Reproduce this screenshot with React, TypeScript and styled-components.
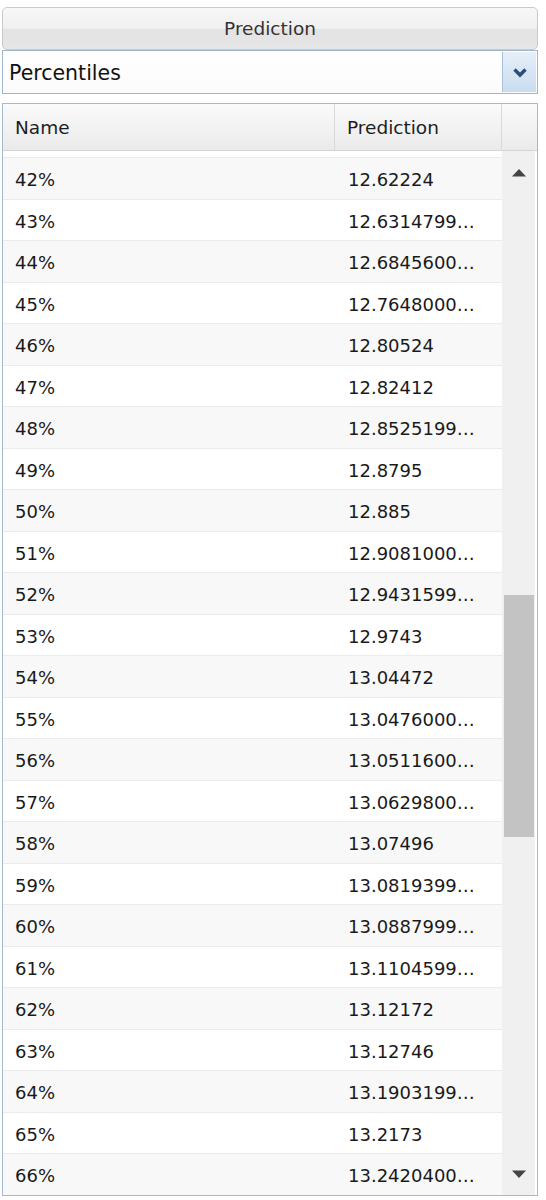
import React from "react";
import styled, { createGlobalStyle } from "styled-components";

const Global = createGlobalStyle`
  html, body { margin: 0; padding: 0; background: #ffffff; }
  body { font-family: "DejaVu Sans", "Liberation Sans", sans-serif; }
`;

const Page = styled.div`
  width: 536px;
  padding: 7px 8px 0 2px;
  display: flex;
  flex-direction: column;
`;

const TitleButton = styled.div`
  height: 43px;
  box-sizing: border-box;
  border: 1px solid #c9c9c9;
  border-radius: 5px;
  background: linear-gradient(#f7f7f7 0%, #f0f0f0 50%, #e3e3e3 52%, #e6e6e6 100%);
  display: flex;
  align-items: center;
  justify-content: center;
  font-size: 18.5px;
  color: #333333;
  padding-bottom: 1px;
`;

const Combo = styled.div`
  height: 44px;
  box-sizing: border-box;
  border: 1px solid #9db7cf;
  background: linear-gradient(#ffffff, #fbfbfb);
  display: flex;
  align-items: stretch;
`;

const ComboText = styled.div`
  flex: 1;
  display: flex;
  align-items: center;
  padding-left: 6px;
  padding-top: 1px;
  font-size: 20.5px;
  color: #111111;
`;

const ComboArrow = styled.div`
  width: 33px;
  margin: 1px;
  border-left: 1px solid #a9c2da;
  background: linear-gradient(#e6eff8, #c9ddf0);
  display: flex;
  align-items: center;
  justify-content: center;
`;

const Table = styled.div`
  margin-top: 9px;
  height: 1093px;
  box-sizing: border-box;
  border: 1px solid #a3bbd2;
  display: flex;
  flex-direction: column;
  overflow: hidden;
`;

const HeaderRow = styled.div`
  height: 47px;
  flex: none;
  box-sizing: border-box;
  display: grid;
  grid-template-columns: 332px 167px 1fr;
  background: linear-gradient(#fafafa, #f1f1f1 60%, #eaeaea);
  border-bottom: 1px solid #d6d6d6;
`;

const HeaderCell = styled.div<{ $last?: boolean }>`
  display: flex;
  align-items: center;
  padding-left: ${(p) => (p.$last ? "0" : "12px")};
  font-size: 18.5px;
  color: #1e1e1e;
  border-right: ${(p) => (p.$last ? "none" : "1px solid #d9d9d9")};
`;

const Body = styled.div`
  flex: 1;
  display: flex;
  min-height: 0;
`;

const Rows = styled.div`
  width: 499px;
  overflow: hidden;
  display: flex;
  flex-direction: column;
`;

const PartialRow = styled.div`
  height: 7px;
  flex: none;
  box-sizing: border-box;
  background: #ffffff;
  border-bottom: 1px solid #ebebeb;
`;

const Row = styled.div<{ $alt: boolean }>`
  height: 41.5px;
  flex: none;
  box-sizing: border-box;
  display: grid;
  grid-template-columns: 332px 167px;
  align-items: center;
  background: ${(p) => (p.$alt ? "#f8f8f8" : "#ffffff")};
  border-bottom: 1px solid #ebebeb;
  font-size: 18px;
  color: #1a1a1a;
`;

const Cell = styled.div<{ $pad: number }>`
  padding-left: ${(p) => p.$pad}px;
  white-space: nowrap;
  overflow: hidden;
  padding-top: 3px;
`;

const ScrollBar = styled.div`
  flex: 1;
  display: flex;
  flex-direction: column;
  background: #f0f0f0;
  border-left: 1px solid #f0f0f0;
  border-right: 2px solid #ffffff;
`;

const ScrollArrow = styled.div`
  height: 42px;
  flex: none;
  display: flex;
  align-items: center;
  justify-content: center;
`;

const Track = styled.div`
  flex: 1;
  display: flex;
  flex-direction: column;
`;

const Thumb = styled.div`
  flex: none;
  margin: 0 1px 0 1px;
  background: #c3c3c3;
`;

const data: [string, string][] = [
  ["42%", "12.62224"],
  ["43%", "12.6314799…"],
  ["44%", "12.6845600…"],
  ["45%", "12.7648000…"],
  ["46%", "12.80524"],
  ["47%", "12.82412"],
  ["48%", "12.8525199…"],
  ["49%", "12.8795"],
  ["50%", "12.885"],
  ["51%", "12.9081000…"],
  ["52%", "12.9431599…"],
  ["53%", "12.9743"],
  ["54%", "13.04472"],
  ["55%", "13.0476000…"],
  ["56%", "13.0511600…"],
  ["57%", "13.0629800…"],
  ["58%", "13.07496"],
  ["59%", "13.0819399…"],
  ["60%", "13.0887999…"],
  ["61%", "13.1104599…"],
  ["62%", "13.12172"],
  ["63%", "13.12746"],
  ["64%", "13.1903199…"],
  ["65%", "13.2173"],
  ["66%", "13.2420400…"],
];

const Chevron = () => (
  <svg width="16" height="11" viewBox="0 0 16 11">
    <polyline points="2.5,2.5 8,8 13.5,2.5" fill="none" stroke="#2b4c7b" strokeWidth="3.4" strokeLinejoin="miter" />
  </svg>
);

const Tri = ({ up }: { up: boolean }) => (
  <svg width="16" height="9" viewBox="0 0 16 9">
    <polygon points={up ? "1,8.5 8,1 15,8.5" : "1,0.5 15,0.5 8,8"} fill="#454545" />
  </svg>
);

export default function App() {
  const thumbTop = 402;
  const thumbHeight = 242;
  return (
    <>
      <Global />
      <Page>
        <TitleButton>Prediction</TitleButton>
        <Combo>
          <ComboText>Percentiles</ComboText>
          <ComboArrow>
            <Chevron />
          </ComboArrow>
        </Combo>
        <Table>
          <HeaderRow>
            <HeaderCell>Name</HeaderCell>
            <HeaderCell>Prediction</HeaderCell>
            <HeaderCell $last />
          </HeaderRow>
          <Body>
            <Rows>
              <PartialRow />
              {data.map(([n, v], i) => (
                <Row key={n} $alt={i % 2 === 0}>
                  <Cell $pad={12}>{n}</Cell>
                  <Cell $pad={13}>{v}</Cell>
                </Row>
              ))}
            </Rows>
            <ScrollBar>
              <ScrollArrow>
                <Tri up />
              </ScrollArrow>
              <Track>
                <Thumb style={{ marginTop: thumbTop, height: thumbHeight }} />
              </Track>
              <ScrollArrow>
                <Tri up={false} />
              </ScrollArrow>
            </ScrollBar>
          </Body>
        </Table>
      </Page>
    </>
  );
}
